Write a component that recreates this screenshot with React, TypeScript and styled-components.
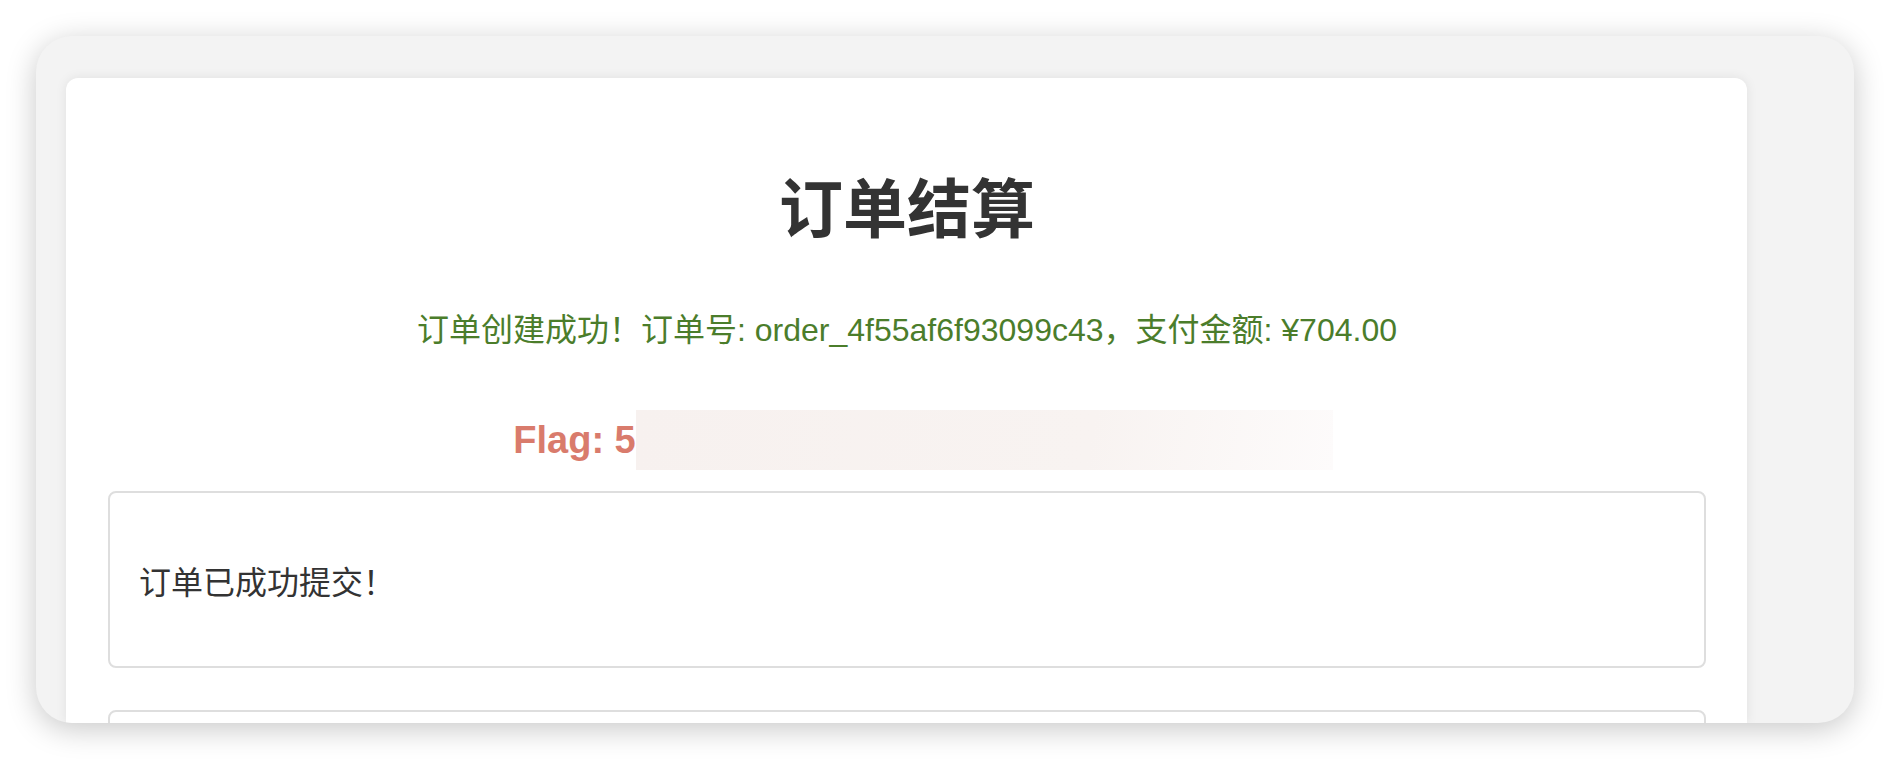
import styled, { createGlobalStyle } from 'styled-components'

const GlobalStyle = createGlobalStyle`
  html, body {
    margin: 0;
    padding: 0;
    background: #ffffff;
  }
  body {
    font-family: 'Liberation Sans', 'Noto Sans CJK SC', Arial, sans-serif;
  }
`

const Frame = styled.div`
  box-sizing: border-box;
  margin: 36px;
  width: 1818px;
  height: 687px;
  padding: 42px 107px 0 30px;
  background: #f3f3f3;
  border-radius: 36px;
  overflow: hidden;
  box-shadow: 0 6px 30px rgba(0, 0, 0, 0.22);
`

const Card = styled.div`
  box-sizing: border-box;
  height: 100%;
  padding: 0 41px 0 42px;
  background: #ffffff;
  border-radius: 12px 12px 0 0;
  box-shadow: 0 0 12px rgba(0, 0, 0, 0.08);
  display: flex;
  flex-direction: column;
`

const Title = styled.h1`
  margin: 94px 0 0;
  font-size: 64px;
  line-height: 77px;
  font-weight: 700;
  color: #333333;
  text-align: center;
`

const Notice = styled.p`
  margin: 61px 0 0;
  font-size: 32px;
  line-height: 40px;
  color: #4b7d2b;
  text-align: center;
`

const FlagLine = styled.div`
  margin-top: 60px;
  height: 60px;
  padding-left: 32px;
  display: flex;
  justify-content: center;
  align-items: center;
`

const FlagText = styled.span`
  font-size: 38px;
  font-weight: 700;
  color: #d97b6c;
  white-space: pre;
`

const Redacted = styled.span`
  width: 697px;
  height: 60px;
  background: linear-gradient(100deg, #f7f1ef 0%, #f8f3f1 65%, #fdfbfb 100%);
`

const Panel = styled.div<{ $gap: number }>`
  box-sizing: border-box;
  flex-shrink: 0;
  margin-top: ${({ $gap }) => $gap}px;
  min-height: 177px;
  padding: 0 29px;
  border: 2px solid #dedede;
  border-radius: 8px;
  display: flex;
  align-items: center;
  font-size: 32px;
  color: #333333;
`

export default function App() {
  return (
    <>
      <GlobalStyle />
      <Frame>
        <Card>
          <Title>订单结算</Title>
          <Notice>
            订单创建成功！订单号: order_4f55af6f93099c43，支付金额: ¥704.00
          </Notice>
          <FlagLine>
            <FlagText>Flag: 5</FlagText>
            <Redacted />
          </FlagLine>
          <Panel $gap={21}>订单已成功提交！</Panel>
          <Panel $gap={42} />
        </Card>
      </Frame>
    </>
  )
}
